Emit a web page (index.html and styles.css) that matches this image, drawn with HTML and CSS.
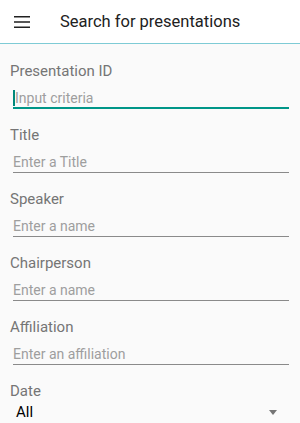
FILE: index.html
```html
<!DOCTYPE html>
<html lang="en">
<head>
    <meta charset="UTF-8">
    <meta name="viewport" content="width=device-width, initial-scale=1.0">
    <title>Search for presentations</title>
    <link rel="stylesheet" href="styles.css">
</head>
<body>
    <header class="toolbar">
        <button class="menu-btn" aria-label="Menu">
            <svg width="16" height="12" viewBox="0 0 16 12">
                <rect x="0" y="0" width="16" height="1.5" fill="#212121"/>
                <rect x="0" y="5.25" width="16" height="1.5" fill="#212121"/>
                <rect x="0" y="10.5" width="16" height="1.5" fill="#212121"/>
            </svg>
        </button>
        <h1 class="toolbar-title">Search for presentations</h1>
    </header>

    <main class="form">
        <div class="field">
            <label for="pid">Presentation ID</label>
            <input type="text" id="pid" class="focused" placeholder="Input criteria">
        </div>
        <div class="field">
            <label for="title">Title</label>
            <input type="text" id="title" placeholder="Enter a Title">
        </div>
        <div class="field">
            <label for="speaker">Speaker</label>
            <input type="text" id="speaker" placeholder="Enter a name">
        </div>
        <div class="field">
            <label for="chair">Chairperson</label>
            <input type="text" id="chair" placeholder="Enter a name">
        </div>
        <div class="field">
            <label for="affiliation">Affiliation</label>
            <input type="text" id="affiliation" placeholder="Enter an affiliation">
        </div>
        <div class="field date-field">
            <label>Date</label>
            <div class="select">
                <span>All</span>
                <span class="arrow"></span>
            </div>
        </div>
    </main>
</body>
</html>
```

FILE: styles.css
```css
/* Base */
body {
    font-family: Roboto, "Noto Sans", sans-serif;
    margin: 0;
    padding: 0;
    background: #fafafa;
    color: #212121;
    overflow: hidden;
}

/* Toolbar */
.toolbar {
    display: flex;
    align-items: center;
    height: 43px;
    background: #fff;
    border-bottom: 1px solid #7ecbd5;
}

.menu-btn {
    display: flex;
    align-items: center;
    justify-content: center;
    width: 16px;
    height: 16px;
    margin-left: 14px;
    padding: 0;
    border: none;
    background: none;
}

.toolbar-title {
    margin: 0 0 0 30px;
    font-size: 16.5px;
    font-weight: 400;
    color: #212121;
}

/* Form */
.form {
    padding: 17px 11px 0 10px;
}

.field {
    display: flex;
    flex-direction: column;
    margin-bottom: 16px;
}

.field label {
    font-size: 15px;
    line-height: 20px;
    color: #757575;
    margin-bottom: 8px;
}

.field input {
    margin-left: 3px;
    height: 19px;
    padding: 0;
    border: none;
    border-bottom: 1px solid #8a8a8a;
    background: transparent;
    font-family: inherit;
    font-size: 14px;
    line-height: 19px;
    color: #212121;
    outline: none;
}

.field input::placeholder {
    color: #9e9e9e;
}

.field input.focused {
    height: 18px;
    border-bottom: 2px solid #009688;
    caret-color: #009688;
}

.field input.focused::placeholder {
    border-left: 2px solid #00897b;
}

/* Date select */
.date-field label {
    margin-bottom: 1px;
}

.select {
    display: flex;
    align-items: center;
    justify-content: space-between;
    padding: 0 12px 0 6px;
    font-size: 15px;
    line-height: 20px;
    color: #000;
}

.arrow {
    width: 0;
    height: 0;
    border-left: 4px solid transparent;
    border-right: 4px solid transparent;
    border-top: 5px solid #757575;
}
```
